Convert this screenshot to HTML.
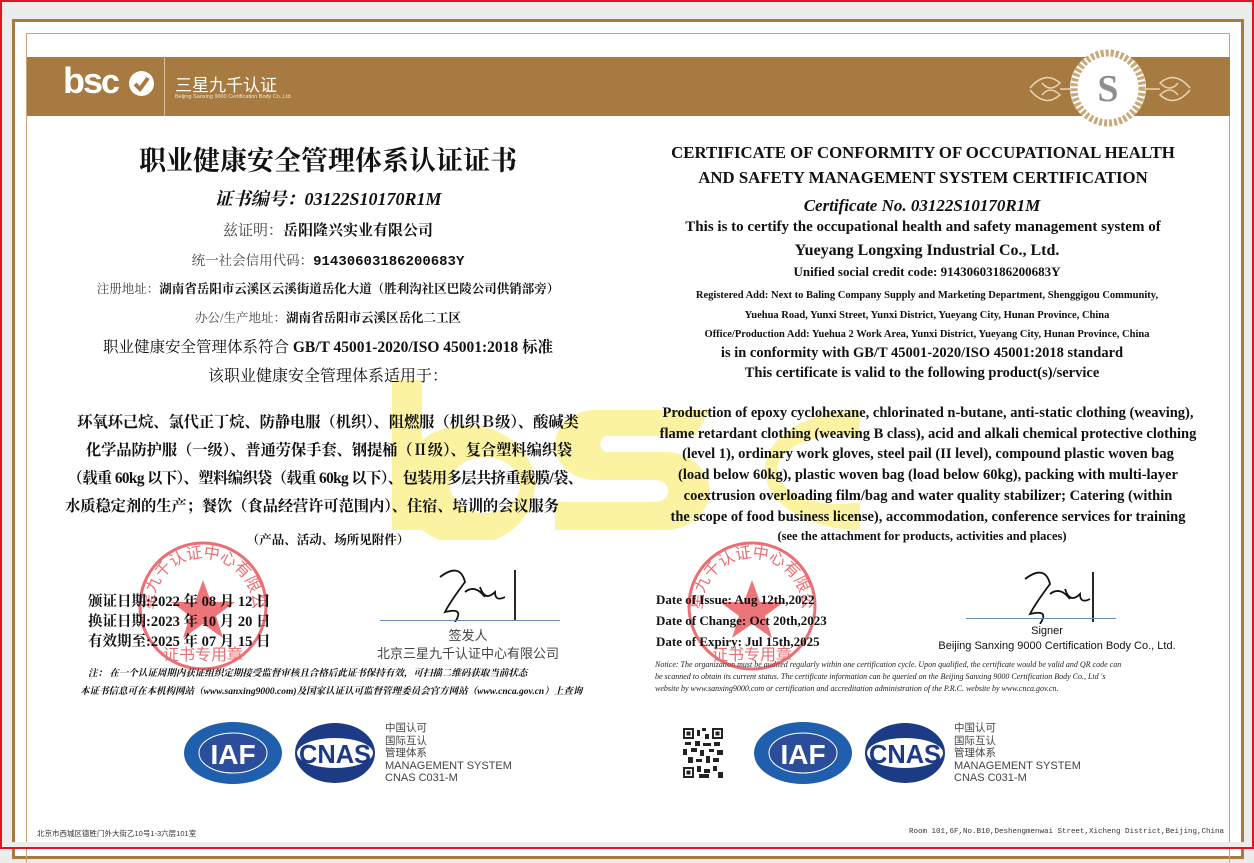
<!DOCTYPE html>
<html><head><meta charset="utf-8"><style>
*{margin:0;padding:0;box-sizing:border-box}
body{width:1254px;height:849px;overflow:hidden;background:#ececec;position:relative;font-family:"Liberation Serif","Noto Serif CJK SC",serif;color:#111}
.a{position:absolute;white-space:nowrap}
.c{transform:translateX(-50%)}
.cn{font-family:"Liberation Serif","Noto Serif CJK SC",serif}
.sans{font-family:"Liberation Sans","Noto Sans CJK SC",sans-serif}
.b{font-weight:bold}
.g{color:#444}
.sc{font-size:15.3px;letter-spacing:-0.1px}
</style></head><body>
<div class="a" style="left:0;top:0;width:1254px;height:849px;border:2px solid #e0161e;z-index:20;pointer-events:none"></div>
<div class="a" style="left:12px;top:19px;width:1232px;height:840px;background:#fff;border:3px solid #a67a40"></div>
<div class="a" style="left:26px;top:33px;width:1204px;height:830px;border:1px solid #c7a477;border-bottom:none"></div>
<div class="a" style="left:27px;top:57px;width:1203px;height:59px;background:#a67a40"></div>
<div class="a sans b" style="left:63px;top:60px;color:#fff;font-size:36px;letter-spacing:-2px">bs<span style="font-size:34px">c</span></div>
<div class="a" style="left:129px;top:71px;width:25px;height:25px;border-radius:50%;background:#fff"></div>
<svg class="a" style="left:129px;top:71px" width="25" height="25"><path d="M6 13 L11 18 L19 7" stroke="#a67a40" stroke-width="4" fill="none"/></svg>
<div class="a" style="left:164px;top:57px;width:1px;height:59px;background:#d9bf97"></div>
<div class="a sans" style="left:175px;top:71px;color:#fff;font-size:17px">三星九千认证</div>
<div class="a sans" style="left:175px;top:94px;color:#f3e6d2;font-size:5.5px">Beijing Sanxing 9000 Certification Body Co.,Ltd.</div>
<svg class="a" style="left:1020px;top:48px" width="180" height="82">
<path d="M10 40 q15 -18 30 -5 q-10 10 -18 0 M10 42 q15 18 30 5 q-10 -10 -18 0 M40 41 h20" stroke="#e8d4b3" stroke-width="1.5" fill="none"/>
<path d="M170 40 q-15 -18 -30 -5 q10 10 18 0 M170 42 q-15 18 -30 5 q10 -10 18 0 M140 41 h-20" stroke="#e8d4b3" stroke-width="1.5" fill="none"/>
<ellipse cx="88" cy="40" rx="38" ry="38" fill="#fff"/>
<ellipse cx="88" cy="40" rx="34" ry="35" fill="none" stroke="#c9a979" stroke-width="7" stroke-dasharray="3 2"/>
<circle cx="88" cy="40" r="24" fill="#fff"/>
<text x="88" y="53" text-anchor="middle" font-family="Liberation Serif" font-weight="bold" font-size="38" fill="#8e8e8e">S</text>
</svg>
<svg class="a" style="left:380px;top:370px;z-index:0" width="500" height="170">
<g fill="#fbf3a2">
<rect x="12" y="10" width="30" height="150"/>
<path d="M42 70 a68 60 0 1 1 0 90 z M70 115 a35 28 0 1 0 70 0 a35 28 0 1 0 -70 0z" fill-rule="evenodd"/>
<path d="M330 40 L215 40 a40 35 0 0 0 0 70 l60 0 a12 10 0 0 1 0 22 l-100 0 l0 28 l110 0 a40 35 0 0 0 0 -78 l-60 0 a12 10 0 0 1 0 -16 l90 0z"/>
<path d="M480 40 a95 60 0 1 0 0 120 l0 -28 a62 34 0 1 1 0 -64z"/>
</g></svg>
<svg width="0" height="0" style="position:absolute"><defs>
<path id="arcT" d="M18 70 A50 50 0 0 1 118 70"/>
</defs></svg>
<div style="position:relative;z-index:2">
<div class="a c b cn" style="left:328px;top:139px;font-size:27px">职业健康安全管理体系认证证书</div>
<div class="a c b" style="left:328px;top:185px;font-size:18px;font-style:italic">证书编号：03122S10170R1M</div>
<div class="a c cn" style="left:328px;top:219px;font-size:15px"><span class="g">兹证明：</span><b>岳阳隆兴实业有限公司</b></div>
<div class="a c cn" style="left:328px;top:249px;font-size:13.5px"><span class="g">统一社会信用代码：</span><b style="font-family:'Liberation Mono';font-size:14px">91430603186200683Y</b></div>
<div class="a c cn" style="left:328px;top:279px;font-size:12.5px"><span class="g">注册地址：</span><b>湖南省岳阳市云溪区云溪街道岳化大道（胜利沟社区巴陵公司供销部旁）</b></div>
<div class="a c cn" style="left:328px;top:308px;font-size:12.5px"><span class="g">办公/生产地址：</span><b>湖南省岳阳市云溪区岳化二工区</b></div>
<div class="a c cn" style="left:328px;top:335px;font-size:15.5px">职业健康安全管理体系符合 <b>GB/T 45001-2020/ISO 45001:2018 标准</b></div>
<div class="a c cn" style="left:328px;top:363px;font-size:16px">该职业健康安全管理体系适用于：</div>
<div class="a c b cn sc" style="left:328px;top:410px">环氧环己烷、氯代正丁烷、防静电服（机织）、阻燃服（机织Ｂ级）、酸碱类</div>
<div class="a c b cn sc" style="left:329px;top:438px">化学品防护服（一级）、普通劳保手套、钢提桶（Ⅱ级）、复合塑料编织袋</div>
<div class="a c b cn sc" style="left:325px;top:466px;letter-spacing:-0.6px">（载重 60kg 以下）、塑料编织袋（载重 60kg 以下）、包装用多层共挤重载膜/袋、</div>
<div class="a c b cn sc" style="left:312px;top:494px">水质稳定剂的生产；餐饮（食品经营许可范围内）、住宿、培训的会议服务</div>
<div class="a c b cn" style="left:328px;top:530px;font-size:12.5px">（产品、活动、场所见附件）</div>
<svg class="a" style="left:135px;top:538px;z-index:3;opacity:.7" width="140" height="140">
<circle cx="68" cy="68" r="63" fill="none" stroke="#e0333a" stroke-width="3"/>
<polygon points="68,42 76,64 100,64 81,78 88,100 68,86 48,100 55,78 36,64 60,64" fill="#e63b41"/>
<text font-size="16" fill="#e0333a" font-family="Noto Sans CJK SC"><textPath href="#arcT" startOffset="50%" text-anchor="middle">三星九千认证中心有限公司</textPath></text>
<text x="68" y="122" text-anchor="middle" font-size="16" fill="#e0333a" font-family="Noto Sans CJK SC">证书专用章</text>
</svg>
<div class="a b cn" style="left:88px;top:592px;font-size:14.5px;line-height:20px;z-index:4">颁证日期:2022 年 08 月 12 日<br>换证日期:2023 年 10 月 20 日<br>有效期至:2025 年 07 月 15 日</div>
<svg class="a" style="left:420px;top:562px" width="110" height="60"><path d="M20 15 q20 -15 25 5 q-15 20 -20 30 q20 -5 10 10 M45 30 q10 -8 20 5 M60 25 q5 15 15 5 q0 10 10 5 M95 8 v50" stroke="#111" stroke-width="1.8" fill="none"/></svg>
<div class="a" style="left:380px;top:620px;width:180px;height:1px;background:#6b8db5"></div>
<div class="a c sans g" style="left:468px;top:625px;font-size:13px">签发人</div>
<div class="a c sans g" style="left:468px;top:643px;font-size:13px">北京三星九千认证中心有限公司</div>
<div class="a b cn" style="left:88px;top:665px;font-size:9.5px;font-style:italic">注： 在一个认证周期内获证组织定期接受监督审核且合格后此证书保持有效，可扫描二维码获取当前状态</div>
<div class="a b cn" style="left:80px;top:683px;font-size:9.5px;font-style:italic">本证书信息可在本机构网站（www.sanxing9000.com)及国家认证认可监督管理委员会官方网站（www.cnca.gov.cn）上查询</div>
<svg class="a" style="left:183px;top:721px" width="200" height="64">
<ellipse cx="50" cy="32" rx="49" ry="31" fill="#1f5fae"/><ellipse cx="50" cy="32" rx="34" ry="20" fill="#2b4d9a" stroke="#fff" stroke-width="1"/>
<text x="50" y="43" text-anchor="middle" font-family="Liberation Sans" font-weight="bold" font-size="28" fill="#fff">IAF</text>
<ellipse cx="152" cy="32" rx="40" ry="30" fill="#1d3b85"/><ellipse cx="152" cy="32" rx="38" ry="15" fill="#fff"/>
<text x="152" y="42" text-anchor="middle" font-family="Liberation Sans" font-weight="bold" font-size="26" fill="#1d3b85" textLength="72" lengthAdjust="spacingAndGlyphs">CNAS</text>
</svg>
<div class="a sans g" style="left:385px;top:722px;font-size:10.5px;line-height:12.5px">中国认可<br>国际互认<br>管理体系<br><span style="font-size:11px">MANAGEMENT SYSTEM<br>CNAS C031-M</span></div>
<div class="a sans" style="left:37px;top:828px;font-size:7.5px;color:#333">北京市西城区德胜门外大街乙10号1-3六层101室</div>
<div class="a c b" style="left:923px;top:140px;font-size:16.8px;line-height:25px;text-align:center">CERTIFICATE OF CONFORMITY OF OCCUPATIONAL HEALTH<br>AND SAFETY MANAGEMENT SYSTEM CERTIFICATION</div>
<div class="a c b" style="left:922px;top:196px;font-size:17px;font-style:italic">Certificate No. 03122S10170R1M</div>
<div class="a c b" style="left:923px;top:219px;font-size:15px">This is to certify the occupational health and safety management system of</div>
<div class="a c b" style="left:927px;top:242px;font-size:16px">Yueyang Longxing Industrial Co., Ltd.</div>
<div class="a c b" style="left:927px;top:264px;font-size:13px">Unified social credit code: 91430603186200683Y</div>
<div class="a c b" style="left:927px;top:286px;font-size:10.5px;text-align:center;line-height:19.5px">Registered Add: Next to Baling Company Supply and Marketing Department, Shenggigou Community,<br>Yuehua Road, Yunxi Street, Yunxi District, Yueyang City, Hunan Province, China<br>Office/Production Add: Yuehua 2 Work Area, Yunxi District, Yueyang City, Hunan Province, China</div>
<div class="a c b" style="left:922px;top:343px;font-size:14.5px;line-height:20px;text-align:center">is in conformity with GB/T 45001-2020/ISO 45001:2018 standard<br>This certificate is valid to the following product(s)/service</div>
<div class="a c b" style="left:928px;top:403px;font-size:14.5px;line-height:20.7px;text-align:center">Production of epoxy cyclohexane, chlorinated n-butane, anti-static clothing (weaving),<br>flame retardant clothing (weaving B class), acid and alkali chemical protective clothing<br>(level 1), ordinary work gloves, steel pail (II level), compound plastic woven bag<br>(load below 60kg), plastic woven bag (load below 60kg), packing with multi-layer<br>coextrusion overloading film/bag and water quality stabilizer; Catering (within<br>the scope of food business license), accommodation, conference services for training</div>
<div class="a c b" style="left:922px;top:529px;font-size:12.5px">(see the attachment for products, activities and places)</div>
<svg class="a" style="left:684px;top:538px;z-index:3;opacity:.7" width="140" height="140">
<circle cx="68" cy="68" r="63" fill="none" stroke="#e0333a" stroke-width="3"/>
<polygon points="68,42 76,64 100,64 81,78 88,100 68,86 48,100 55,78 36,64 60,64" fill="#e63b41"/>
<text font-size="16" fill="#e0333a" font-family="Noto Sans CJK SC"><textPath href="#arcT" startOffset="50%" text-anchor="middle">三星九千认证中心有限公司</textPath></text>
<text x="68" y="122" text-anchor="middle" font-size="16" fill="#e0333a" font-family="Noto Sans CJK SC">证书专用章</text>
</svg>
<div class="a b" style="left:656px;top:589px;font-size:13px;line-height:21px;z-index:4">Date of Issue: Aug 12th,2022<br>Date of Change: Oct 20th,2023<br>Date of Expiry: Jul 15th,2025</div>
<svg class="a" style="left:1005px;top:564px" width="110" height="60"><path d="M20 15 q20 -15 25 5 q-15 20 -20 30 q20 -5 10 10 M45 30 q10 -8 20 5 M60 25 q5 15 15 5 q0 10 10 5 M88 8 v50" stroke="#111" stroke-width="1.8" fill="none"/></svg>
<div class="a" style="left:966px;top:618px;width:150px;height:1px;background:#6b8db5"></div>
<div class="a c sans" style="left:1047px;top:625px;font-size:11px">Signer</div>
<div class="a c sans" style="left:1057px;top:640px;font-size:11px">Beijing Sanxing 9000 Certification Body Co., Ltd.</div>
<div class="a" style="left:655px;top:659px;font-size:8px;font-style:italic;line-height:12px;color:#222">Notice: The organization must be audited regularly within one certification cycle. Upon qualified, the certificate would be valid and QR code can<br>be scanned to obtain its current status. The certificate information can be queried on the Beijing Sanxing 9000 Certification Body Co., Ltd 's<br>website by www.sanxing9000.com or certification and accreditation administration of the P.R.C. website by www.cnca.gov.cn.</div>
<svg class="a" style="left:683px;top:728px" width="40" height="50">
<rect width="40" height="50" fill="#fff"/>
<g fill="#222">
<rect x="0" y="0" width="11" height="11"/><rect x="29" y="0" width="11" height="11"/><rect x="0" y="39" width="11" height="11"/>
<rect x="14" y="2" width="3" height="6"/><rect x="19" y="0" width="4" height="3"/><rect x="22" y="6" width="4" height="5"/>
<rect x="2" y="14" width="6" height="3"/><rect x="12" y="13" width="5" height="5"/><rect x="20" y="15" width="8" height="3"/><rect x="31" y="14" width="6" height="4"/>
<rect x="0" y="21" width="4" height="6"/><rect x="8" y="20" width="6" height="4"/><rect x="17" y="22" width="4" height="6"/><rect x="26" y="21" width="5" height="3"/><rect x="34" y="22" width="6" height="5"/>
<rect x="5" y="29" width="5" height="6"/><rect x="13" y="31" width="6" height="3"/><rect x="23" y="28" width="4" height="7"/><rect x="30" y="30" width="6" height="4"/>
<rect x="14" y="38" width="4" height="6"/><rect x="21" y="41" width="6" height="4"/><rect x="30" y="38" width="4" height="5"/><rect x="35" y="44" width="5" height="6"/><rect x="16" y="46" width="10" height="4"/>
</g>
<g fill="#fff"><rect x="2" y="2" width="7" height="7"/><rect x="31" y="2" width="7" height="7"/><rect x="2" y="41" width="7" height="7"/></g>
<g fill="#222"><rect x="3.5" y="3.5" width="4" height="4"/><rect x="32.5" y="3.5" width="4" height="4"/><rect x="3.5" y="42.5" width="4" height="4"/></g>
</svg>
<svg class="a" style="left:753px;top:721px" width="200" height="64">
<ellipse cx="50" cy="32" rx="49" ry="31" fill="#1f5fae"/><ellipse cx="50" cy="32" rx="34" ry="20" fill="#2b4d9a" stroke="#fff" stroke-width="1"/>
<text x="50" y="43" text-anchor="middle" font-family="Liberation Sans" font-weight="bold" font-size="28" fill="#fff">IAF</text>
<ellipse cx="152" cy="32" rx="40" ry="30" fill="#1d3b85"/><ellipse cx="152" cy="32" rx="38" ry="15" fill="#fff"/>
<text x="152" y="42" text-anchor="middle" font-family="Liberation Sans" font-weight="bold" font-size="26" fill="#1d3b85" textLength="72" lengthAdjust="spacingAndGlyphs">CNAS</text>
</svg>
<div class="a sans g" style="left:954px;top:722px;font-size:10.5px;line-height:12.5px">中国认可<br>国际互认<br>管理体系<br><span style="font-size:11px">MANAGEMENT SYSTEM<br>CNAS C031-M</span></div>
<div class="a" style="right:30px;top:828px;font-size:7.5px;font-family:'Liberation Mono',monospace;color:#333">Room 101,6F,No.B10,Deshengmenwai Street,Xicheng District,Beijing,China</div>
</div>
<div class="a" style="left:0;top:842px;width:1254px;height:7px;background:#ececec;z-index:10"></div>
</body></html>
